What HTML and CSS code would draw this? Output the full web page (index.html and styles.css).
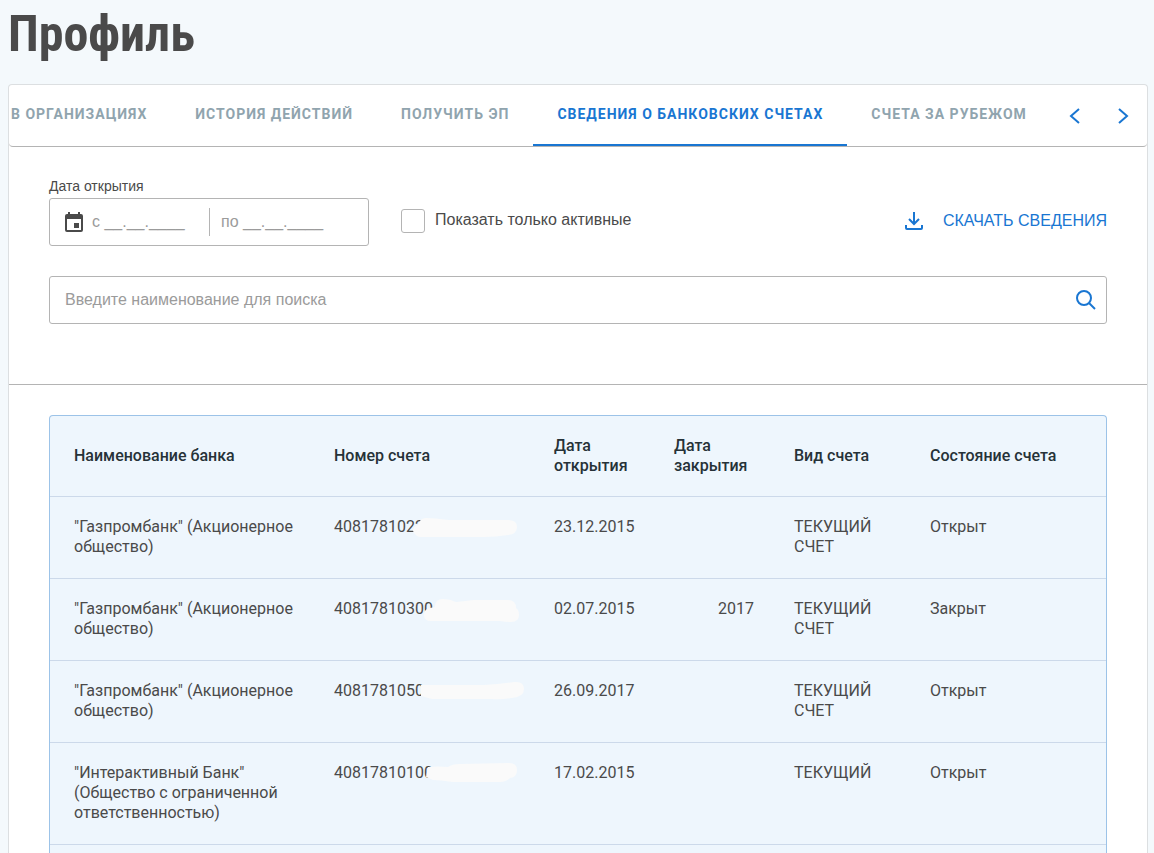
FILE: index.html
```
<!DOCTYPE html>
<html lang="ru">
<head>
    <title>Профиль</title>
    <meta charset="UTF-8">
    <meta name="viewport" content="width=device-width, initial-scale=1">
    <link rel="stylesheet" href="styles.css">
</head>
<body>

    <h1>Профиль</h1>

    <main class="card">

        <!-- Tabs -->
        <nav class="tabs">
            <div class="tab-list">
                <a href="#orgs" class="tab tab-cut">В организациях</a>
                <a href="#history" class="tab">История действий</a>
                <a href="#signature" class="tab">Получить ЭП</a>
                <a href="#accounts" class="tab active">Сведения о банковских счетах</a>
                <a href="#abroad" class="tab">Счета за рубежом</a>
            </div>
            <button type="button" class="arrow" aria-label="Назад">
                <svg width="12" height="16" viewBox="0 0 12 16"><path d="M10 1 L2 8 L10 15"/></svg>
            </button>
            <button type="button" class="arrow" aria-label="Вперед">
                <svg width="12" height="16" viewBox="0 0 12 16"><path d="M2 1 L10 8 L2 15"/></svg>
            </button>
        </nav>

        <!-- Filters -->
        <form class="filters">
            <label class="field-label" for="date_from">Дата открытия</label>
            <div class="filter-row">
                <div class="date-range">
                    <svg class="calendar" width="18" height="20" viewBox="0 0 18 20">
                        <path fill-rule="evenodd" d="M3 0h2v2h8V0h2v2h1a2 2 0 0 1 2 2v14a2 2 0 0 1-2 2H2a2 2 0 0 1-2-2V4a2 2 0 0 1 2-2h1zM2 7v11h14V7zM9 11h5v5H9z"/>
                    </svg>
                    <input type="text" id="date_from" class="date-from" placeholder="с __.__.____">
                    <input type="text" id="date_to" class="date-to" placeholder="по __.__.____" aria-label="Дата открытия по">
                </div>
                <div class="check">
                    <input type="checkbox" id="active_only">
                    <label for="active_only">Показать только активные</label>
                </div>
                <a href="#download" class="download">
                    <svg width="18" height="18" viewBox="0 0 18 18">
                        <path d="M9 0v12M4 7l5 5 5-5M1 13v3a1 1 0 0 0 1 1h14a1 1 0 0 0 1-1v-3"/>
                    </svg>
                    СКАЧАТЬ СВЕДЕНИЯ
                </a>
            </div>
            <div class="search">
                <input type="text" placeholder="Введите наименование для поиска" aria-label="Поиск">
                <button type="submit" aria-label="Найти">
                    <svg width="20" height="20" viewBox="0 0 20 20"><circle cx="8" cy="8" r="7"/><path d="M13 13l6 6"/></svg>
                </button>
            </div>
        </form>

        <!-- Accounts -->
        <div class="accounts">
            <table>
                <colgroup>
                    <col class="col-bank">
                    <col class="col-number">
                    <col class="col-date">
                    <col class="col-date">
                    <col class="col-type">
                    <col>
                </colgroup>
                <thead>
                    <tr>
                        <th>Наименование банка</th>
                        <th>Номер счета</th>
                        <th>Дата открытия</th>
                        <th>Дата закрытия</th>
                        <th>Вид счета</th>
                        <th>Состояние счета</th>
                    </tr>
                </thead>
                <tbody>
                    <tr>
                        <td>"Газпромбанк" (Акционерное общество)</td>
                        <td class="number">4081781022
                            <svg class="mask" width="192" height="24"><path d="M79 14Q79 9 84 8Q86 1 92 1Q100 1 115 3H174Q183 3 183 10Q183 17 174 18Q162 20 150 20H87Q82 20 79 14Z"/></svg>
                        </td>
                        <td>23.12.2015</td>
                        <td></td>
                        <td>ТЕКУЩИЙ СЧЕТ</td>
                        <td>Открыт</td>
                    </tr>
                    <tr>
                        <td>"Газпромбанк" (Акционерное общество)</td>
                        <td class="number">40817810300
                            <svg class="mask" width="192" height="24"><path d="M90 16Q90 10 96 9L101 8Q101 0 109 0Q116 0 122 3L140 1H174Q182 1 182 9Q185 11 185 16Q185 23 177 23Q172 23 166 22H97Q90 22 90 16Z"/></svg>
                        </td>
                        <td>02.07.2015</td>
                        <td class="year">2017</td>
                        <td>ТЕКУЩИЙ СЧЕТ</td>
                        <td>Закрыт</td>
                    </tr>
                    <tr>
                        <td>"Газпромбанк" (Акционерное общество)</td>
                        <td class="number">4081781050
                            <svg class="mask" width="192" height="24"><path d="M87 4H150Q166 3 180 1Q190 0 190 8Q190 16 178 17Q166 19 158 18H98L87 15Z"/></svg>
                        </td>
                        <td>26.09.2017</td>
                        <td></td>
                        <td>ТЕКУЩИЙ СЧЕТ</td>
                        <td>Открыт</td>
                    </tr>
                    <tr>
                        <td>"Интерактивный Банк" (Общество с ограниченной ответственностью)</td>
                        <td class="number">40817810100
                            <svg class="mask" width="192" height="24"><path d="M94 4Q104 3 114 4Q118 1 126 1L175 0Q183 0 183 7Q183 14 176 15Q172 19 166 19H119Q106 17 99 17L92 14Z"/></svg>
                        </td>
                        <td>17.02.2015</td>
                        <td></td>
                        <td>ТЕКУЩИЙ</td>
                        <td>Открыт</td>
                    </tr>
                </tbody>
            </table>
        </div>

    </main>

</body>
</html>
```
FILE: styles.css
```
* {
    box-sizing: border-box;
}

body {
    font-family: "Liberation Sans", Arial, sans-serif;
    font-size: 16px;
    color: #4a4a4a;
    background-color: #f4f9fc;
    margin: 0;
    padding: 0 6px 0 8px;
    min-height: 100vh;
    display: flex;
    flex-direction: column;
}

h1 {
    font-family: "Roboto Condensed", "Liberation Sans Narrow", Roboto, sans-serif;
    font-size: 50px;
    font-weight: 700;
    line-height: 68px;
    margin: 0;
    height: 84px;
}

.card {
    flex: 1;
    display: flex;
    flex-direction: column;
    background-color: #ffffff;
    border: 1px solid #dcdfe1;
    border-bottom: none;
    border-radius: 4px 4px 0 0;
}

/* Tabs */
.tabs {
    display: flex;
    align-items: stretch;
    height: 62px;
    border-bottom: 1px solid #b4b4b4;
    border-radius: 4px;
    padding-right: 12px;
}

.tab-list {
    flex: 1;
    min-width: 0;
    display: flex;
    overflow: hidden;
}

.tab {
    font-family: Roboto, sans-serif;
    font-size: 14px;
    font-weight: 700;
    line-height: 20px;
    letter-spacing: 1px;
    text-transform: uppercase;
    text-decoration: none;
    white-space: nowrap;
    color: #90a4ae;
    padding: 19px 24px 0;
}

.tab-cut {
    padding-left: 2px;
}

.tab.active {
    color: #1976d2;
    border-bottom: 2px solid #1976d2;
}

.arrow {
    width: 24px;
    border: none;
    background: none;
    padding: 0;
    margin-left: 24px;
    cursor: pointer;
}

.arrow svg {
    display: block;
    margin: 0 auto;
}

.arrow path,
.download path,
.search circle,
.search path {
    fill: none;
    stroke: #1976d2;
    stroke-width: 2;
}

/* Filters */
.filters {
    padding: 30px 40px 60px;
    border-bottom: 1px solid #b4b4b4;
}

.field-label {
    display: block;
    font-size: 14px;
    line-height: 18px;
    margin-bottom: 3px;
}

.filter-row {
    display: flex;
    align-items: center;
    margin-bottom: 30px;
}

.date-range {
    display: flex;
    align-items: center;
    width: 320px;
    height: 48px;
    border: 1px solid #b4b4b4;
    border-radius: 3px;
    padding: 0 15px;
}

.calendar {
    fill: #4a4a4a;
    margin-right: 9px;
}

input[type="text"] {
    font-family: inherit;
    font-size: 16px;
    color: #4a4a4a;
    border: none;
    background: none;
    outline: none;
    padding: 0;
    min-width: 0;
}

input::placeholder {
    color: #9b9b9b;
    opacity: 1;
}

.date-from {
    width: 117px;
}

.date-range .date-to {
    flex: 1;
    height: 28px;
    border-left: 1px solid #b4b4b4;
    padding-left: 11px;
}

.check {
    display: flex;
    align-items: center;
    margin-left: 32px;
    padding-bottom: 2px;
}

.check label {
    padding-bottom: 2px;
}

.check input {
    appearance: none;
    width: 24px;
    height: 24px;
    border: 1px solid #b4b4b4;
    border-radius: 3px;
    margin: 0 10px 0 0;
}

.check input:checked {
    background-color: #1976d2;
}

.download {
    display: flex;
    align-items: center;
    gap: 20px;
    margin-left: auto;
    padding-bottom: 2px;
    color: #1976d2;
    text-decoration: none;
}

.search {
    display: flex;
    align-items: center;
    height: 48px;
    border: 1px solid #b4b4b4;
    border-radius: 3px;
    padding: 0 10px 0 15px;
}

.search input {
    flex: 1;
}

.search button {
    border: none;
    background: none;
    padding: 0;
    cursor: pointer;
}

.search svg {
    display: block;
}

/* Accounts */
.accounts {
    flex: 1;
    display: flex;
    flex-direction: column;
    margin: 30px 40px 0;
    background-color: #eef6fd;
    border: 1px solid #9cc3e8;
    border-bottom: none;
    border-radius: 4px 4px 0 0;
}

table {
    width: 100%;
    table-layout: fixed;
    border-collapse: separate;
    border-spacing: 0;
    font-family: Roboto, sans-serif;
    line-height: 20px;
}

.col-bank { width: 260px; }
.col-number { width: 220px; }
.col-date { width: 120px; }
.col-type { width: 136px; }

th,
td {
    text-align: left;
    border-bottom: 1px solid #ccd9ea;
}

th {
    font-weight: 500;
    color: #263238;
    padding: 20px 16px 20px 24px;
}

td {
    vertical-align: top;
    padding: 20px 12px 21px 24px;
}

.number {
    position: relative;
}

/* Hides the tail of the account number */
.mask {
    position: absolute;
    top: 20px;
    left: 24px;
    fill: #fafafa;
}

td.year {
    text-align: right;
    padding-right: 16px;
}
```
